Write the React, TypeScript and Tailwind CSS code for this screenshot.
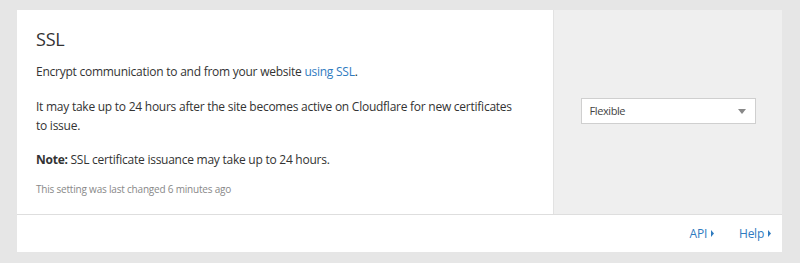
export default function App() {
  return (
    <div className="min-h-[263px] w-full bg-[#e6e6e6] pt-[10px] px-[17px] pb-[11px] font-['Open_Sans',sans-serif] text-[#333]">
      <div className="bg-white w-[765px]">
        <div className="flex border-b border-[#dedede]">
          {/* description */}
          <div className="w-[536px] pl-[19px] pr-[36px] pt-[15px] pb-[17px]">
            <h2 className="text-[18px] leading-[28px] tracking-[-0.2px] font-normal text-[#333]">SSL</h2>
            <p className="mt-[9px] text-[12px] leading-[20px] tracking-[-0.25px]">
              Encrypt communication to and from your website{" "}
              <a className="text-[#2f7bbf]">using SSL</a>.
            </p>
            <p className="mt-[15px] text-[12px] leading-[19px] tracking-[-0.25px]">
              It may take up to 24 hours after the site becomes active on Cloudflare for new certificates to issue.
            </p>
            <p className="mt-[15px] text-[12px] leading-[20px] tracking-[-0.25px]">
              <strong className="font-bold">Note:</strong> SSL certificate issuance may take up to 24 hours.
            </p>
            <p className="mt-[11px] text-[10px] leading-[16px] tracking-[-0.2px] text-[#888]">
              This setting was last changed 6 minutes ago
            </p>
          </div>

          {/* control */}
          <div className="flex-1 bg-[#efefef] border-l border-[#e2e2e2] flex items-center justify-center">
            <div className="w-[175px] h-[26px] mb-[2px] bg-white border border-[#cfcfcf] flex items-center justify-between pl-[8px] pr-[9px]">
              <span className="text-[11px] tracking-[-0.4px] text-[#444]">Flexible</span>
              <svg width="8" height="5" viewBox="0 0 8 5">
                <path d="M0 0 L8 0 L4 5 Z" fill="#888" />
              </svg>
            </div>
          </div>
        </div>

        {/* footer */}
        <div className="h-[37px] flex items-center justify-end pr-[11px] gap-[25px] text-[12px] tracking-[-0.25px] text-[#2f7bbf]">
          <a className="flex items-center gap-[4px]">
            API
            <svg width="3" height="7" viewBox="0 0 3 7">
              <path d="M0 0 L3 3.5 L0 7 Z" fill="#2f7bbf" />
            </svg>
          </a>
          <a className="flex items-center gap-[4px]">
            Help
            <svg width="3" height="7" viewBox="0 0 3 7">
              <path d="M0 0 L3 3.5 L0 7 Z" fill="#2f7bbf" />
            </svg>
          </a>
        </div>
      </div>
    </div>
  );
}
